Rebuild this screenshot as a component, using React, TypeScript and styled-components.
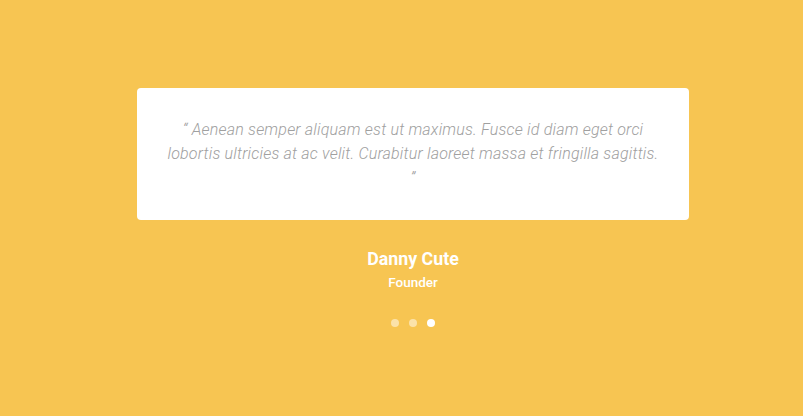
import React from "react";
import styled, { createGlobalStyle } from "styled-components";

const Global = createGlobalStyle`
  html, body { margin: 0; padding: 0; }
  body { background: #f7c552; font-family: Roboto, "Noto Sans", sans-serif; }
`;

const Page = styled.div`
  width: 803px;
  height: 416px;
  background: #f7c552;
  display: flex;
  flex-direction: column;
  align-items: center;
  box-sizing: border-box;
  padding: 88px 0 0 23px;
`;

const Card = styled.div`
  width: 552px;
  box-sizing: border-box;
  background: #ffffff;
  border-radius: 4px;
  padding: 30px 28px 30px;
`;

const Quote = styled.p`
  margin: 0;
  font-family: Roboto, sans-serif;
  font-weight: 300;
  font-style: italic;
  font-size: 16px;
  letter-spacing: 0.2px;
  line-height: 24px;
  color: #a0a0a0;
  text-align: center;
`;

const Name = styled.div`
  margin-top: 28px;
  font-weight: 700;
  font-size: 17.8px;
  line-height: 22px;
  color: #ffffff;
`;

const Role = styled.div`
  margin-top: 3px;
  font-weight: 500;
  font-size: 13.5px;
  line-height: 18px;
  color: #ffffff;
`;

const Dots = styled.div`
  display: flex;
  gap: 10px;
  margin-top: 28px;
`;

const Dot = styled.span<{ $active?: boolean }>`
  width: 8px;
  height: 8px;
  border-radius: 50%;
  background: #ffffff;
  opacity: ${(p) => (p.$active ? 1 : 0.5)};
`;

export default function App() {
  return (
    <>
      <Global />
      <Page>
        <Card>
          <Quote>
            “ Aenean semper aliquam est ut maximus. Fusce id diam eget orci lobortis ultricies at ac velit. Curabitur laoreet massa et fringilla sagittis. ”
          </Quote>
        </Card>
        <Name>Danny Cute</Name>
        <Role>Founder</Role>
        <Dots>
          <Dot />
          <Dot />
          <Dot $active />
        </Dots>
      </Page>
    </>
  );
}
